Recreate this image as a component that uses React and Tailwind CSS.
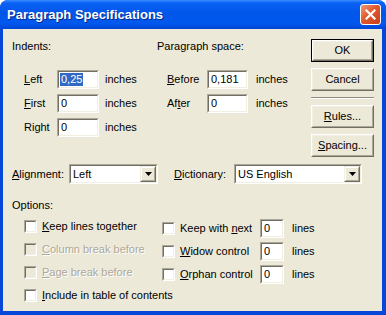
import React from 'react';

// classic 3D frames on the Luna palette
const Sunken = ({ className = '', inner = 'bg-white', children }) => (
  <div className={`border border-t-[#aca899] border-l-[#aca899] border-b-white border-r-white ${className}`}>
    <div className={`h-full w-full border border-t-[#716f64] border-l-[#716f64] border-b-[#f1efe2] border-r-[#f1efe2] ${inner}`}>
      {children}
    </div>
  </div>
);

const Button = ({ children, isDefault }) => {
  const face = (
    <div className="h-full w-full border border-t-white border-l-white border-b-[#716f64] border-r-[#716f64]">
      <div className="h-full w-full flex items-center justify-center border border-t-[#f1efe2] border-l-[#f1efe2] border-b-[#aca899] border-r-[#aca899]">
        {children}
      </div>
    </div>
  );
  return (
    <div className={`h-[23px] w-[63px] bg-[#ece9d8] ${isDefault ? 'border border-black' : ''}`}>{face}</div>
  );
};

const TextBox = ({ value, selected, className = '' }) => (
  <Sunken className={`h-[19px] ${className}`}>
    <div className="h-full flex items-center pl-[1px] leading-[13px]">
      {selected ? <span className="bg-[#316ac5] text-white px-[1px]">{value}</span> : <span className="px-[1px]">{value}</span>}
    </div>
  </Sunken>
);

const Select = ({ value, className = '' }) => (
  <Sunken className={`h-[20px] ${className}`}>
    <div className="h-full flex items-center">
      <span className="flex-1 pl-[2px]">{value}</span>
      <div className="h-[16px] w-[16px] border border-t-[#f1efe2] border-l-[#f1efe2] border-b-[#716f64] border-r-[#716f64] bg-[#ece9d8]">
        <div className="h-full w-full flex items-center justify-center border border-t-white border-l-white border-b-[#aca899] border-r-[#aca899]">
          <svg width="7" height="4" viewBox="0 0 7 4">
            <path d="M0 0h7L3.5 4z" fill="#000" />
          </svg>
        </div>
      </div>
    </div>
  </Sunken>
);

const Check = ({ disabled, children }) => (
  <div className="flex items-center">
    <Sunken className="h-[13px] w-[13px] shrink-0" inner={disabled ? 'bg-[#ece9d8]' : 'bg-white'} />
    <span
      className={`ml-[5px] leading-[13px] whitespace-nowrap ${
        disabled ? 'text-[#aca899] [text-shadow:1px_1px_0_#fff]' : ''
      }`}
    >
      {children}
    </span>
  </div>
);

const Row = ({ label, labelW, input, unitGap, children }) => (
  <div className="flex items-center h-[19px]">
    <span className={`${labelW} leading-[13px]`}>{label}</span>
    {input}
    <span className={`${unitGap} leading-[13px]`}>{children}</span>
  </div>
);

export default function App() {
  return (
    <div className="w-[386px] h-[315px] flex flex-col rounded-t-[8px] overflow-hidden bg-[#0846d8] text-[11px] text-black font-['Liberation_Sans',Arial,sans-serif]">
      {/* title bar */}
      <div className="h-[29px] shrink-0 flex items-center pl-[7px] pr-[5px] bg-[linear-gradient(to_bottom,#3b8dff_0%,#0a62f5_10%,#0056e8_45%,#0058ee_80%,#0046d4_100%)]">
        <span className="flex-1 font-bold text-[13px] text-white [text-shadow:1px_1px_0_#0a2a8c]">Paragraph Specifications</span>
        <div className="h-[21px] w-[21px] rounded-[3px] border border-white flex items-center justify-center bg-[linear-gradient(135deg,#f09a78_0%,#e2582f_45%,#c73e17_100%)]">
          <svg width="11" height="11" viewBox="0 0 11 11">
            <path d="M1.5 1.5l8 8M9.5 1.5l-8 8" stroke="#fff" strokeWidth="2.2" strokeLinecap="square" />
          </svg>
        </div>
      </div>

      {/* client area */}
      <div className="flex-1 ml-[3px] mr-[4px] mb-[4px] bg-[#ece9d8] flex flex-col">
        <div className="flex pt-[10px] pl-[9px]">
          {/* Indents */}
          <div className="w-[145px] pt-[1px]">
            <div className="leading-[13px]">Indents:</div>
            <div className="mt-[17px] flex flex-col gap-[5px] pl-[12px]">
              <Row label={<><u>L</u>eft</>} labelW="w-[33px]" unitGap="ml-[6px]" input={<TextBox value="0,25" selected className="w-[42px]" />}>
                inches
              </Row>
              <Row label={<><u>F</u>irst</>} labelW="w-[33px]" unitGap="ml-[6px]" input={<TextBox value="0" className="w-[42px]" />}>
                inches
              </Row>
              <Row label="Right" labelW="w-[33px]" unitGap="ml-[6px]" input={<TextBox value="0" className="w-[42px]" />}>
                inches
              </Row>
            </div>
          </div>

          {/* Paragraph space */}
          <div className="w-[154px] pt-[1px]">
            <div className="leading-[13px]">Paragraph space:</div>
            <div className="mt-[17px] flex flex-col gap-[5px] pl-[10px]">
              <Row label={<><u>B</u>efore</>} labelW="w-[40px]" unitGap="ml-[8px]" input={<TextBox value="0,181" className="w-[41px]" />}>
                inches
              </Row>
              <Row label={<>Af<u>t</u>er</>} labelW="w-[40px]" unitGap="ml-[8px]" input={<TextBox value="0" className="w-[41px]" />}>
                inches
              </Row>
            </div>
          </div>

          {/* buttons */}
          <div className="flex flex-col w-[63px]">
            <Button isDefault>OK</Button>
            <div className="mt-[6px]"><Button>Cancel</Button></div>
            <div className="mt-[6px] h-[2px] bg-[#8f8c80] border-b border-white" />
            <div className="mt-[6px]"><Button><span><u>R</u>ules...</span></Button></div>
            <div className="mt-[6px]"><Button><span><u>S</u>pacing...</span></Button></div>
          </div>
        </div>

        {/* alignment / dictionary */}
        <div className="mt-[7px] flex items-center pl-[9px]">
          <span className="w-[57px] leading-[13px]"><u>A</u>lignment:</span>
          <Select value="Left" className="w-[89px]" />
          <span className="ml-[16px] w-[60px] leading-[13px]"><u>D</u>ictionary:</span>
          <Select value="US English" className="w-[128px]" />
        </div>

        {/* options */}
        <div className="mt-[15px] pl-[9px] leading-[13px]">Options:</div>
        <div className="mt-[7px] flex pl-[21px]">
          <div className="w-[138px] flex flex-col gap-[10px] pt-[1px]">
            <Check><u>K</u>eep lines together</Check>
            <Check disabled><u>C</u>olumn break before</Check>
            <Check disabled><u>P</u>age break before</Check>
            <Check><u>I</u>nclude in table of contents</Check>
          </div>
          <div className="flex flex-col gap-[4px]">
            {[
              <>Keep with <u>n</u>ext</>,
              <><u>W</u>idow control</>,
              <><u>O</u>rphan control</>,
            ].map((label, i) => (
              <div key={i} className="flex items-center h-[19px]">
                <div className="w-[98px]"><Check>{label}</Check></div>
                <TextBox value="0" className="w-[24px]" />
                <span className="ml-[8px] leading-[13px]">lines</span>
              </div>
            ))}
          </div>
        </div>
      </div>
    </div>
  );
}
